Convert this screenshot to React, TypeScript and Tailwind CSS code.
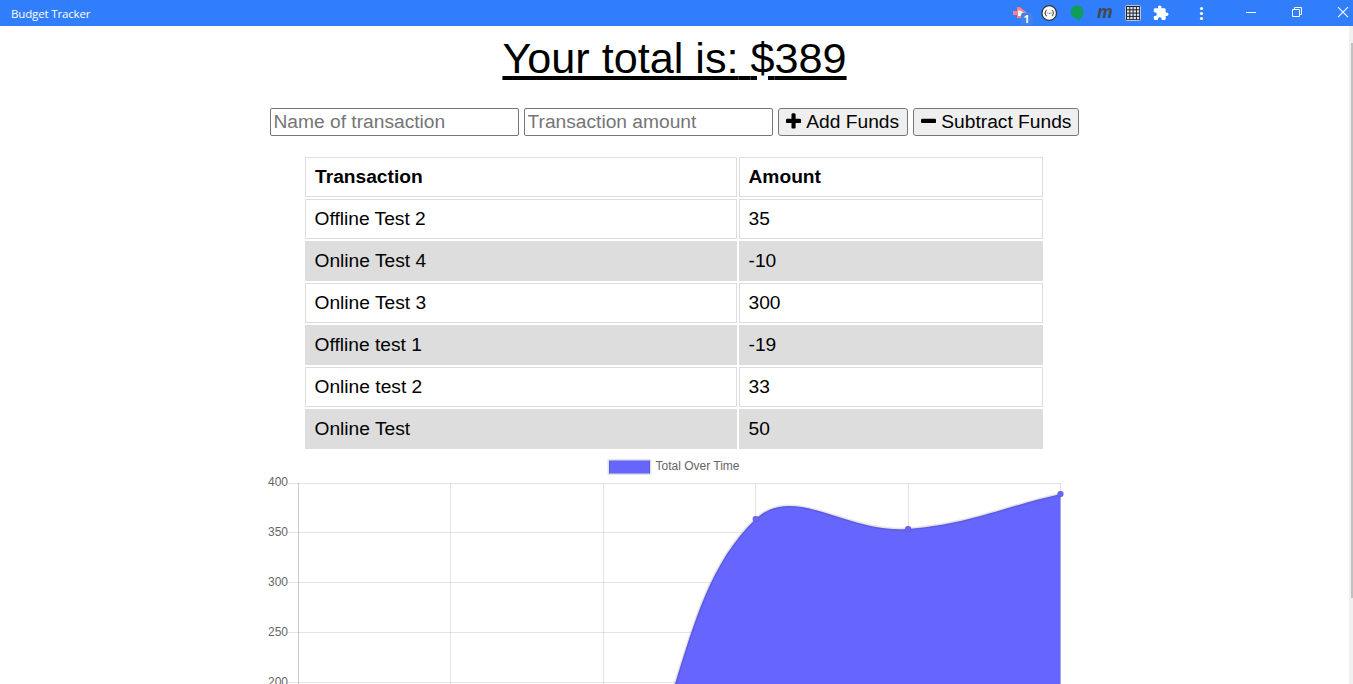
import React from "react";

const transactions = [
  { name: "Offline Test 2", amount: 35 },
  { name: "Online Test 4", amount: -10 },
  { name: "Online Test 3", amount: 300 },
  { name: "Offline test 1", amount: -19 },
  { name: "Online test 2", amount: 33 },
  { name: "Online Test", amount: 50 },
];

const PLUS =
  "M1600 736v192q0 40-28 68t-68 28h-416v416q0 40-28 68t-68 28H800q-40 0-68-28t-28-68v-416H288q-40 0-68-28t-28-68V736q0-40 28-68t68-28h416V224q0-40 28-68t68-28h192q40 0 68 28t28 68v416h416q40 0 68 28t28 68z";
const MINUS =
  "M1600 736v192q0 40-28 68t-68 28H288q-40 0-68-28t-28-68V736q0-40 28-68t68-28h1216q40 0 68 28t28 68z";

function TitleBar() {
  return (
    <header className="flex h-[26px] shrink-0 items-center bg-[#307efb] pl-[11px] font-['Open_Sans',sans-serif] text-white">
      <span className="mt-[2px] text-[11.5px] leading-none tracking-[-0.15px]">Budget Tracker</span>
      <div className="ml-auto flex h-full">
        <svg width="353" height="26" viewBox="1000 0 353 26">
          {/* extension with badge */}
          <path d="M1013 11h4V7h3l7 6h-5v5h-5v-3h-4z" fill="#ff7f86" />
          <path d="M1018 10.500h2.500l3 2.500v3h-5.500z" fill="#fff" />
          <rect x="1021" y="13" width="11.5" height="12" rx="2" fill="#4083ee" />
          <text x="1026.6" y="23" fontSize="10.5" fontWeight="700" textAnchor="middle" fill="#fff">1</text>
          {/* braces */}
          <circle cx="1049.2" cy="13" r="7.3" fill="#fff" stroke="#333" strokeWidth="1.3" />
          <path
            d="M1046.8 10.2q-1.2 0-1.2 1.2v.8q0 .9-1 .9 1 0 1 .9v.8q0 1.2 1.2 1.2M1051.8 10.2q1.2 0 1.2 1.2v.8q0 .9 1 .9-1 0-1 .9v.8q0 1.2-1.2 1.2M1047.5 13.2h.8M1049 13.2h.8M1050.5 13.2h.8"
            fill="none"
            stroke="#333"
            strokeWidth="1"
          />
          {/* speech bubble */}
          <path d="M1076.800 5.200a6.600 6.600 0 0 1 6.600 6.700c0 3.600-2.400 6.900-5.700 8.900v-2.400a6.600 6.600 0 1 1-.9-13.200z" fill="#0f9d58" />
          <text x="1105" y="18" fontSize="17.500" fontWeight="700" fontStyle="italic" textAnchor="middle" fill="#45484d">m</text>
          {/* grid */}
          <rect x="1125.500" y="5.500" width="15" height="15" rx="1" fill="#202124" stroke="#b5c5dc" />
          {[0, 1, 2, 3].map((r) =>
            [0, 1, 2, 3].map((c) => (
              <rect key={`${r}${c}`} x={1127 + c * 3.3} y={7 + r * 3.3} width="2.300" height="2.300" fill="#dfe6f2" />
            ))
          )}
          {/* puzzle */}
          <g transform="translate(1152.400 4.700) scale(0.700)">
            <path
              d="M20.500 11H19V7c0-1.100-.9-2-2-2h-4V3.500C13 2.120 11.880 1 10.500 1S8 2.120 8 3.500V5H4c-1.100 0-1.990.9-1.990 2v3.800H3.500c1.490 0 2.700 1.210 2.700 2.700s-1.210 2.700-2.700 2.700H2V20c0 1.100.9 2 2 2h3.800v-1.500c0-1.490 1.210-2.700 2.700-2.700s2.700 1.210 2.700 2.700V22H17c1.100 0 2-.9 2-2v-4h1.500c1.380 0 2.500-1.120 2.500-2.500S21.880 11 20.500 11z"
              fill="#fff"
            />
          </g>
          <g fill="#fff">
            <circle cx="1201.500" cy="8.500" r="1.600" />
            <circle cx="1201.500" cy="13.500" r="1.600" />
            <circle cx="1201.500" cy="18.500" r="1.600" />
          </g>
          <g fill="none" stroke="#fff">
            <path d="M1246 12.500h10" />
            <path d="M1292.500 9.500h7v7h-7zM1294.500 9.500v-2h7v7h-2" />
            <path d="M1338 7.200l10 10M1348 7.200l-10 10" strokeWidth="1.100" />
          </g>
        </svg>
      </div>
    </header>
  );
}

function FundsButton({ icon, label, width }: { icon: string; label: string; width: string }) {
  return (
    <button
      className={`flex h-7 items-center whitespace-nowrap rounded-[3px] border border-[#767676] bg-[#efefef] pl-[7px] text-black ${width}`}
    >
      <svg className="mr-[5.2px] h-[19.2px] w-[15.1px] shrink-0" viewBox="192 0 1408 1792">
        <path d={icon} />
      </svg>
      <span className="leading-[26px]">{label}</span>
    </button>
  );
}

const inputClass =
  "h-7 w-[249px] rounded-[2px] border border-[#767676] bg-white pl-[2.5px] pt-px text-[19.2px] outline-none placeholder:text-[#757575]";

const ORIGIN_X = 298.5;
const STEP_X = 152.4;
const TOP_Y = 483;
const yFor = (v: number) => TOP_Y + (400 - v) * 0.998;

function linePath(points: { x: number; y: number }[]) {
  const tension = 0.4;
  const ctrl = points.map((p, i) => {
    const prev = points[i - 1] ?? p;
    const next = points[i + 1] ?? p;
    const d01 = Math.hypot(p.x - prev.x, p.y - prev.y);
    const d12 = Math.hypot(next.x - p.x, next.y - p.y);
    const fa = (tension * d01) / (d01 + d12);
    const fb = (tension * d12) / (d01 + d12);
    const cap = (y: number) => Math.min(Math.max(y, TOP_Y), yFor(0));
    return {
      inX: p.x - fa * (next.x - prev.x),
      inY: cap(p.y - fa * (next.y - prev.y)),
      outX: p.x + fb * (next.x - prev.x),
      outY: cap(p.y + fb * (next.y - prev.y)),
    };
  });
  return points
    .map((p, i) =>
      i === 0
        ? `M${p.x} ${p.y}`
        : `C${ctrl[i - 1].outX} ${ctrl[i - 1].outY} ${ctrl[i].inX} ${ctrl[i].inY} ${p.x} ${p.y}`
    )
    .join("");
}

function TotalChart() {
  let sum = 0;
  const points = [...transactions].reverse().map((t, i) => {
    sum += t.amount;
    return { x: ORIGIN_X + i * STEP_X, y: yFor(sum) };
  });
  const line = linePath(points);
  const last = points[points.length - 1];
  return (
    <svg className="block shrink-0" width="1349" height="233" viewBox="0 451 1349 233">
      <rect x="609" y="460.500" width="41" height="13" fill="#6666ff" stroke="#000" strokeOpacity="0.1" strokeWidth="3" />
      <rect x="610" y="461" width="39" height="12" fill="#6666ff" />
      <g fontSize="12" fill="#666">
        <text x="655.500" y="470">Total Over Time</text>
        {[400, 350, 300, 250, 200].map((v, i) => (
          <text key={v} x="288" y={486 + i * 50} textAnchor="end">{v}</text>
        ))}
      </g>
      <g stroke="#000" strokeOpacity="0.1" shapeRendering="crispEdges">
        {[483.5, 532.5, 582.5, 632.5, 682.5].map((y) => (
          <path key={y} d={`M288 ${y}H1061`} />
        ))}
        {[450.5, 603.5, 755.5, 908.5, 1060.5].map((x) => (
          <path key={x} d={`M${x} 483V684`} />
        ))}
        <path d="M298.500 483V684" strokeOpacity="0.200" />
      </g>
      <path d={`${line}L${last.x} ${yFor(0)}L${ORIGIN_X} ${yFor(0)}Z`} fill="#6666ff" />
      <path d={line} fill="none" stroke="#000" strokeOpacity="0.1" strokeWidth="3" />
      {points.map((p) => (
        <circle key={p.x} cx={p.x} cy={p.y} r="3" fill="#6666ff" stroke="#000" strokeOpacity="0.1" />
      ))}
    </svg>
  );
}

export default function App() {
  return (
    <div className="flex h-[684px] w-[1353px] flex-col overflow-hidden bg-white font-['Liberation_Sans',Arial,sans-serif] text-[19.2px] text-black">
      <TitleBar />
      <div className="flex min-h-0 flex-1">
        <main className="flex w-[1349px] flex-col overflow-hidden">
          <h1 className="h-[82px] shrink-0 pt-[7px] text-center text-[43.2px] leading-[50px] underline decoration-[4px] underline-offset-[3px]">
            Your total is:{" "}
            <span className="relative">
              $
              {/* break in the underline below the dollar sign */}
              <span className="absolute bottom-[1px] left-[6.6px] h-[5px] w-[11px] bg-white" />
            </span>
            389
          </h1>
          <form className="flex shrink-0 justify-center gap-[5px]">
            <input className={inputClass} placeholder="Name of transaction" />
            <input className={inputClass} placeholder="Transaction amount" />
            <FundsButton icon={PLUS} label="Add Funds" width="w-[130px]" />
            <FundsButton icon={MINUS} label="Subtract Funds" width="w-[166px]" />
          </form>
          <table className="ml-[303px] mt-[19px] w-[742px] shrink-0 table-fixed border-separate border-spacing-[2px] text-left leading-[22px]">
            <thead>
              <tr className="h-10">
                <th className="w-[432px] border border-[#ddd] px-[9px] font-bold">Transaction</th>
                <th className="border border-[#ddd] px-[8.5px] font-bold">Amount</th>
              </tr>
            </thead>
            <tbody>
              {transactions.map((t) => (
                <tr key={t.name} className="h-10 even:bg-[#ddd]">
                  <td className="border border-[#ddd] px-[8.5px]">{t.name}</td>
                  <td className="border border-[#ddd] px-[8.5px]">{t.amount}</td>
                </tr>
              ))}
            </tbody>
          </table>
          <TotalChart />
        </main>
        <div className="w-1 bg-[#f0f0f0] pl-[2px] pt-[17px]">
          <div className="h-[555px] bg-[#c1c1c1]" />
        </div>
      </div>
    </div>
  );
}
